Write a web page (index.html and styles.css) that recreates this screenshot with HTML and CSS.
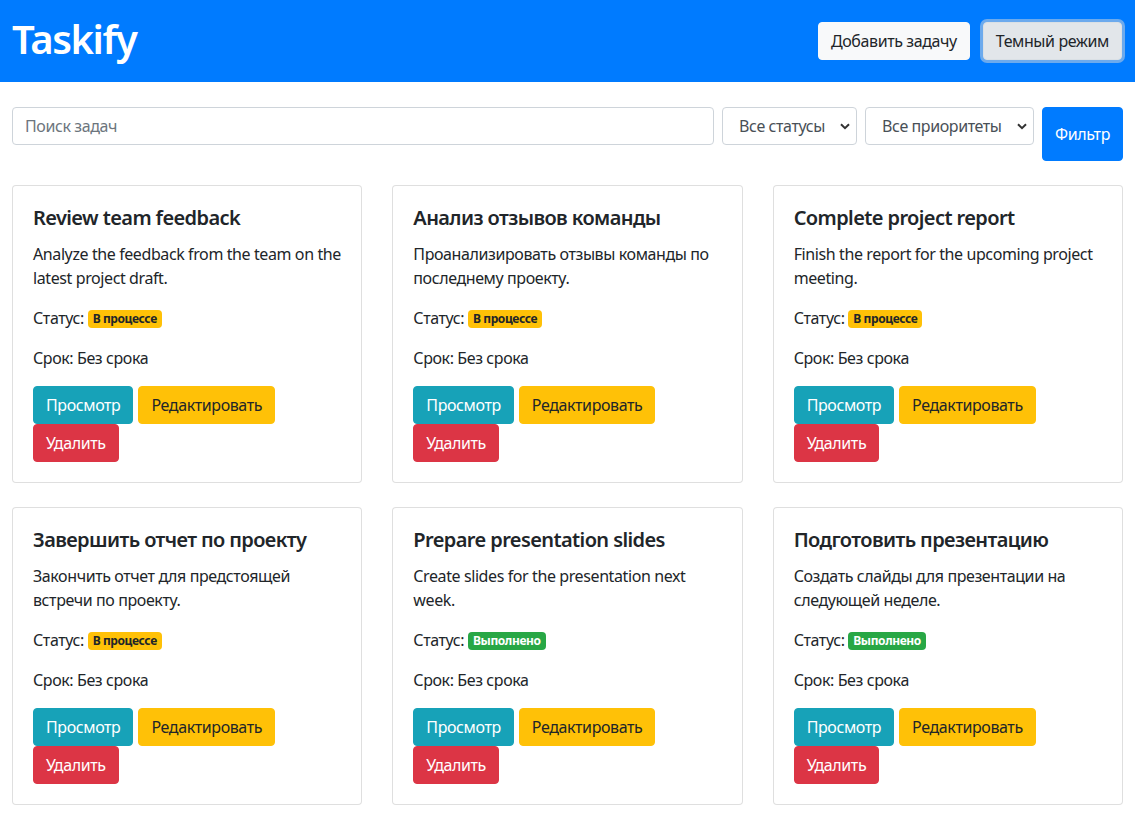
FILE: index.html
```html
<!DOCTYPE html>
<html lang="ru">
<head>
<meta charset="utf-8">
<title>Taskify</title>
<link rel="stylesheet" href="styles.css">
</head>
<body>
<header class="topbar">
  <h1 class="brand">Taskify</h1>
  <div class="top-actions">
    <button class="btn btn-light">Добавить задачу</button>
    <button class="btn btn-light is-focused">Темный режим</button>
  </div>
</header>
<main class="page">
  <form class="filters">
    <input class="field search" type="text" placeholder="Поиск задач">
    <select class="field select">
      <option>Все статусы</option>
      <option>В процессе</option>
      <option>Выполнено</option>
    </select>
    <select class="field select">
      <option>Все приоритеты</option>
      <option>Высокий</option>
      <option>Низкий</option>
    </select>
    <button type="button" class="btn btn-primary filter-btn">Фильтр</button>
  </form>

  <section class="grid">
    <article class="card">
      <h5 class="card-title">Review team feedback</h5>
      <p class="card-text">Analyze the feedback from the team on the latest project draft.</p>
      <p class="meta">Статус: <span class="badge badge-warning">В процессе</span></p>
      <p class="meta">Срок: Без срока</p>
      <div class="actions">
        <button class="btn btn-info">Просмотр</button>
        <button class="btn btn-warning">Редактировать</button>
        <button class="btn btn-danger">Удалить</button>
      </div>
    </article>
    <article class="card">
      <h5 class="card-title">Анализ отзывов команды</h5>
      <p class="card-text">Проанализировать отзывы команды по последнему проекту.</p>
      <p class="meta">Статус: <span class="badge badge-warning">В процессе</span></p>
      <p class="meta">Срок: Без срока</p>
      <div class="actions">
        <button class="btn btn-info">Просмотр</button>
        <button class="btn btn-warning">Редактировать</button>
        <button class="btn btn-danger">Удалить</button>
      </div>
    </article>
    <article class="card">
      <h5 class="card-title">Complete project report</h5>
      <p class="card-text">Finish the report for the upcoming project meeting.</p>
      <p class="meta">Статус: <span class="badge badge-warning">В процессе</span></p>
      <p class="meta">Срок: Без срока</p>
      <div class="actions">
        <button class="btn btn-info">Просмотр</button>
        <button class="btn btn-warning">Редактировать</button>
        <button class="btn btn-danger">Удалить</button>
      </div>
    </article>
    <article class="card">
      <h5 class="card-title">Завершить отчет по проекту</h5>
      <p class="card-text">Закончить отчет для предстоящей встречи по проекту.</p>
      <p class="meta">Статус: <span class="badge badge-warning">В процессе</span></p>
      <p class="meta">Срок: Без срока</p>
      <div class="actions">
        <button class="btn btn-info">Просмотр</button>
        <button class="btn btn-warning">Редактировать</button>
        <button class="btn btn-danger">Удалить</button>
      </div>
    </article>
    <article class="card">
      <h5 class="card-title">Prepare presentation slides</h5>
      <p class="card-text">Create slides for the presentation next week.</p>
      <p class="meta">Статус: <span class="badge badge-success">Выполнено</span></p>
      <p class="meta">Срок: Без срока</p>
      <div class="actions">
        <button class="btn btn-info">Просмотр</button>
        <button class="btn btn-warning">Редактировать</button>
        <button class="btn btn-danger">Удалить</button>
      </div>
    </article>
    <article class="card">
      <h5 class="card-title">Подготовить презентацию</h5>
      <p class="card-text">Создать слайды для презентации на следующей неделе.</p>
      <p class="meta">Статус: <span class="badge badge-success">Выполнено</span></p>
      <p class="meta">Срок: Без срока</p>
      <div class="actions">
        <button class="btn btn-info">Просмотр</button>
        <button class="btn btn-warning">Редактировать</button>
        <button class="btn btn-danger">Удалить</button>
      </div>
    </article>
  </section>
</main>
</body>
</html>
```

FILE: styles.css
```css
* { box-sizing: border-box; }

body {
  margin: 0;
  font-family: "Noto Sans", "Open Sans", sans-serif;
  font-size: 16px;
  line-height: 1.5;
  letter-spacing: -0.025em;
  color: #212529;
  background: #fff;
}

.topbar {
  height: 82px;
  background: #007bff;
  display: flex;
  align-items: center;
  justify-content: space-between;
  padding: 0 13px 0 12px;
}

.brand {
  margin: 0;
  color: #fff;
  font-size: 40px;
  font-weight: 600;
  line-height: 1.2;
  letter-spacing: -0.035em;
  padding-bottom: 4px;
}

.top-actions {
  display: flex;
  gap: 13px;
  align-items: center;
}

.btn {
  font-family: inherit;
  font-size: 16px;
  line-height: 24px;
  letter-spacing: inherit;
  padding: 6px 12px;
  border: 1px solid transparent;
  border-radius: 4px;
  cursor: pointer;
  white-space: nowrap;
}

.btn-light {
  background: #f8f9fa;
  border-color: #f8f9fa;
  color: #212529;
}

.btn-light.is-focused {
  background: #e2e6ea;
  border-color: #dae0e5;
  box-shadow: 0 0 0 3px rgba(216, 217, 219, 0.5);
}

.btn-primary { background: #007bff; border-color: #007bff; color: #fff; }
.btn-info { background: #17a2b8; border-color: #17a2b8; color: #fff; }
.btn-warning { background: #ffc107; border-color: #ffc107; color: #212529; }
.btn-danger { background: #dc3545; border-color: #dc3545; color: #fff; }

.page {
  padding: 25px 12px 12px;
}

.filters {
  display: flex;
  align-items: flex-start;
  gap: 8px;
  margin: 0 0 24px;
}

.field {
  height: 38px;
  font-family: inherit;
  font-size: 16px;
  line-height: 24px;
  letter-spacing: inherit;
  color: #495057;
  background-color: #fff;
  border: 1px solid #ced4da;
  border-radius: 4px;
}

.search {
  flex: 1;
  padding: 6px 12px;
}

.search::placeholder { color: #6c757d; }

.select {
  appearance: none;
  -webkit-appearance: none;
  padding: 6px 31px 6px 16px;
  background-image: url("data:image/svg+xml,%3Csvg xmlns='http://www.w3.org/2000/svg' width='10' height='7' viewBox='0 0 10 7'%3E%3Cpath d='M1 1.2l4 4 4-4' fill='none' stroke='%23333' stroke-width='2'/%3E%3C/svg%3E");
  background-repeat: no-repeat;
  background-position: right 6px center;
  background-size: 10px 7px;
}

.filter-btn {
  padding: 14px 12px;
}

.grid {
  display: grid;
  grid-template-columns: repeat(3, 1fr);
  column-gap: 30px;
  row-gap: 24px;
}

.card {
  border: 1px solid rgba(0, 0, 0, 0.125);
  border-radius: 4px;
  padding: 20px;
  background: #fff;
}

.card-title {
  margin: 0 0 12px;
  font-size: 20px;
  font-weight: 600;
  line-height: 1.2;
  letter-spacing: -0.03em;
}

.card-text, .meta {
  margin: 0 0 16px;
}

.badge {
  display: inline-block;
  font-size: 12px;
  font-weight: 700;
  line-height: 1;
  padding: 3px 5px;
  border-radius: 4px;
  vertical-align: 1px;
}

.badge-warning { background: #ffc107; color: #212529; }
.badge-success { background: #28a745; color: #fff; }

.actions {
  display: flex;
  flex-wrap: wrap;
  column-gap: 5px;
}
```
